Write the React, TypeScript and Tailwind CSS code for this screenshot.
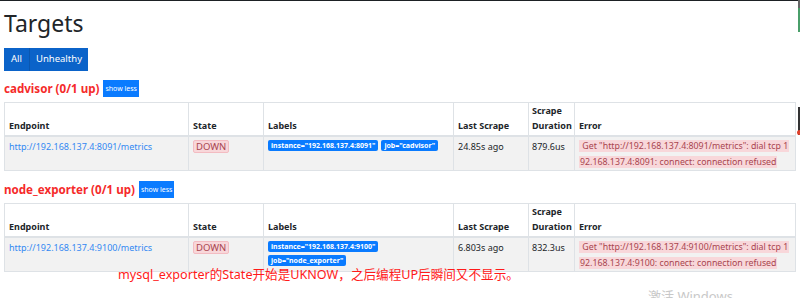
import React from "react";

type Target = {
  job: string;
  endpoint: string;
  labels: string[];
  stacked: boolean;
  lastScrape: string;
  duration: string;
  err1: string;
  err2: string;
};

const targets: Target[] = [
  {
    job: "cadvisor",
    endpoint: "http://192.168.137.4:8091/metrics",
    labels: ['instance="192.168.137.4:8091"', 'job="cadvisor"'],
    stacked: false,
    lastScrape: "24.85s ago",
    duration: "879.6us",
    err1: '\u00a0Get "http://192.168.137.4:8091/metrics": dial tcp 1',
    err2: "92.168.137.4:8091: connect: connection refused",
  },
  {
    job: "node_exporter",
    endpoint: "http://192.168.137.4:9100/metrics",
    labels: ['instance="192.168.137.4:9100"', 'job="node_exporter"'],
    stacked: true,
    lastScrape: "6.803s ago",
    duration: "832.3us",
    err1: '\u00a0Get "http://192.168.137.4:9100/metrics": dial tcp 1',
    err2: "92.168.137.4:9100: connect: connection refused",
  },
];

const th =
  "border border-[#dee2e6] border-b-2 align-bottom text-left px-[4px] pb-[2px] font-bold leading-[15px] text-[#212529]";
const td =
  "border border-[#dee2e6] align-top px-[4px] pt-[2px] leading-[15px] text-[#212529]";

function TargetTable({ t }: { t: Target }) {
  return (
    <div>
      <div className="flex items-center gap-[4px] h-[17px]">
        <h2 className="text-[11.6px] font-bold text-[#f52a2a] leading-[17px]">
          {t.job} (0/1 up)
        </h2>
        <button className="bg-[#0a7bff] text-white text-[7px] leading-[17px] px-[2px] h-[17px]">
          show less
        </button>
      </div>
      <table className="mt-[5px] table-fixed border-collapse w-[791px] text-[9px]">
        <colgroup>
          <col className="w-[184px]" />
          <col className="w-[75px]" />
          <col className="w-[190px]" />
          <col className="w-[75px]" />
          <col className="w-[46px]" />
          <col className="w-[221px]" />
        </colgroup>
        <thead>
          <tr className="h-[33px]">
            <th className={th}>Endpoint</th>
            <th className={th}>State</th>
            <th className={th}>Labels</th>
            <th className={th}>Last Scrape</th>
            <th className={th + " !px-[3px]"}>
              Scrape
              <br />
              Duration
            </th>
            <th className={th}>Error</th>
          </tr>
        </thead>
        <tbody>
          <tr className="bg-[#f2f2f2] h-[32px]">
            <td className={td}>
              <a className="text-[#3389f2]">{t.endpoint}</a>
            </td>
            <td className={td}>
              <span className="inline-block bg-[#f8d7da] border border-[#f3bcc2] rounded-[2px] text-[#a8454f] leading-[11px] px-[2px] text-[9.5px]">
                DOWN
              </span>
            </td>
            <td className={td + " !pt-[3px]"}>
              <div className={t.stacked ? "flex flex-col items-start gap-[3px]" : "flex gap-[3px]"}>
                {t.labels.map((l) => (
                  <span
                    key={l}
                    className="bg-[#0a7bff] text-white font-bold text-[7px] leading-[11px] px-[3px] rounded-[2px] whitespace-nowrap"
                  >
                    {l}
                  </span>
                ))}
              </div>
            </td>
            <td className={td}>{t.lastScrape}</td>
            <td className={td + " !px-[3px]"}>{t.duration}</td>
            <td className={td + " !leading-[16px] !pt-[1px] whitespace-nowrap"}>
              <span className="bg-[#f8d7da] text-[#a8454f] box-decoration-clone px-[1px] text-[8.8px]">
                {t.err1}
                <br />
                {t.err2}
              </span>
            </td>
          </tr>
        </tbody>
      </table>
    </div>
  );
}

export default function App() {
  return (
    <div
      className="relative w-[800px] h-[298px] overflow-hidden bg-white"
      style={{ fontFamily: '"Noto Sans", "Open Sans", sans-serif' }}
    >
      <div className="h-[1px] bg-[#1d2124]" />
      <div className="px-[4px]">
        <h1 className="mt-[8px] text-[23px] leading-[28px] text-[#212529]">Targets</h1>
        <div className="mt-[11px] flex h-[23px] w-fit text-[9.5px] text-white">
          <button className="bg-[#0b63c9] w-[26px] border-r border-[#0a57b0]">All</button>
          <button className="bg-[#0b63c9] w-[58px]">Unhealthy</button>
        </div>
        <div className="mt-[9px]">
          <TargetTable t={targets[0]} />
        </div>
        <div className="mt-[10px]">
          <TargetTable t={targets[1]} />
        </div>
      </div>

      {/* annotation drawn over the screenshot */}
      <div
        className="absolute left-[118px] top-[266px] text-[12.6px] leading-[17px] text-[#ff1a1a] whitespace-nowrap"
        style={{ fontFamily: '"Noto Sans", "Noto Sans CJK SC", sans-serif' }}
      >
        mysql_exporter的State开始是UKNOW，之后编程UP后瞬间又不显示。
      </div>
      <div
        className="absolute left-[648px] top-[288px] text-[13px] leading-[17px] text-[#c8c8c8] whitespace-nowrap"
        style={{ fontFamily: '"Noto Sans", "Noto Sans CJK SC", sans-serif' }}
      >
        激活 Windows
      </div>

      {/* widgets peeking in at the right edge */}
      <div className="absolute right-0 top-0 w-[2px] h-[32px] bg-[#4a9f6a]">
        <div className="h-[8px] bg-[#666]" />
      </div>
      <div className="absolute right-0 top-[107px] w-[2px] h-[28px] bg-[#333]" />
      <div className="absolute right-[-2px] top-[130px] w-[5px] h-[5px] rounded-full bg-[#e0402a]" />
    </div>
  );
}
